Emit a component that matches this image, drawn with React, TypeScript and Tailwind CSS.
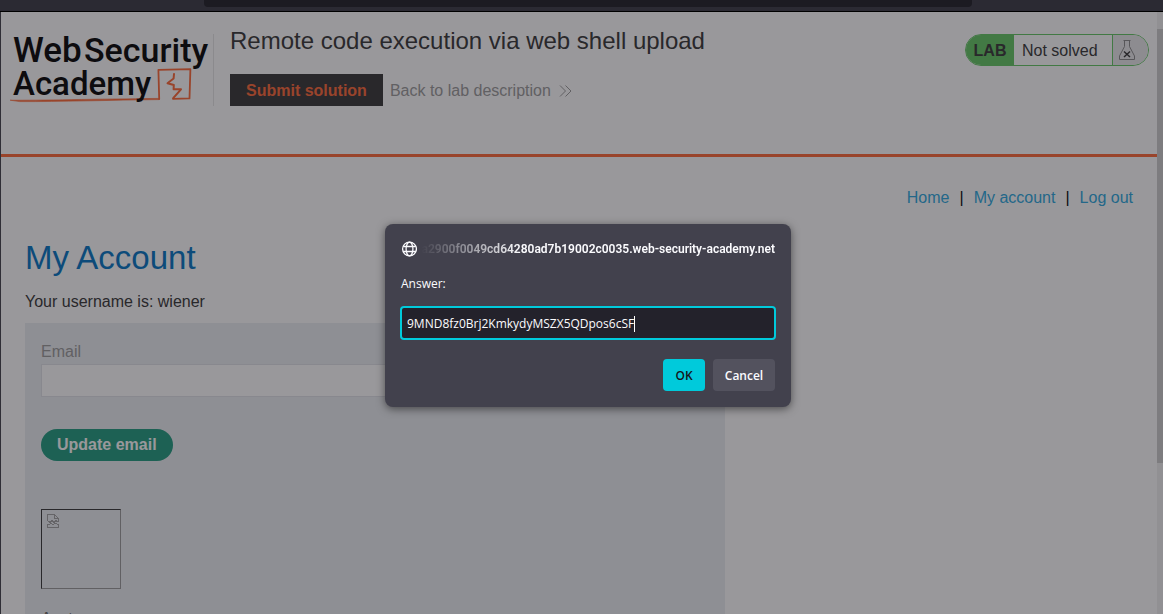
import React from "react";

function Logo() {
  return (
    <svg width="200" height="72" viewBox="10 34 200 72" role="img" aria-label="Web Security Academy" className="block shrink-0 overflow-visible">
      <g fill="#ff6633" stroke="#ff6633" strokeLinecap="round" strokeLinejoin="round">
        <path d="M10.5 100.2C40 100.4 95 99 159 98.4V99.6C110 100.2 60 101.8 20 101.6Z" strokeWidth="0.6" />
        <path d="M159.2 99L158.4 69.8L190.4 69.2L189.5 98.4L173 98.8" fill="none" strokeWidth="1.8" />
        <path d="M174 74L173.6 78.5L167.5 83.2L173.8 85L173.6 89.2L181 89.3L173.2 98.2" fill="none" strokeWidth="2" />
      </g>
      <g fill="#000" style={{ fontFamily: "Roboto, sans-serif" }} fontWeight="500">
        <text x="13" y="62" fontSize="35">Web</text>
        <text x="84" y="62" fontSize="34">Security</text>
        <text x="13" y="95" fontSize="33">Academy</text>
      </g>
    </svg>
  );
}

function Flask() {
  return (
    <svg width="16" height="20" viewBox="0 0 16 20" fill="none" stroke="#888" strokeWidth="1" aria-hidden="true">
      <path d="M4.5 0.5H11.5M5.5 1V6.5L0.5 16V19.5H15.5V16L10.5 6.5V1" />
      <path d="M5 11.5L11 17M11 11.5L5 17" stroke="#333" strokeWidth="1.5" />
    </svg>
  );
}

function BrokenImage() {
  return (
    <svg width="12" height="14" viewBox="0 0 12 14" fill="none" stroke="#a0a0a0" strokeWidth="1" shapeRendering="crispEdges" aria-hidden="true">
      <path d="M0.5 7V0.5H7.5L11.5 4.5V8M7.5 0.5V4.5H11.5" />
      <path d="M0.5 6.5L3 8.5L5 6.5L7 8.5L9 6.5L11.5 8.5M0.5 10L2 11L4 9L6 11L8 9L11.5 11V13.5H0.5V10" />
    </svg>
  );
}

function Globe() {
  return (
    <svg width="16" height="16" viewBox="0 0 16 16" fill="none" stroke="#fbfbfe" strokeWidth="1.3" className="shrink-0" aria-hidden="true">
      <circle cx="8.5" cy="8" r="6.9" />
      <ellipse cx="8.5" cy="8" rx="3.4" ry="6.9" />
      <path d="M2.2 5.5H14.8M2.2 10.5H14.8" />
    </svg>
  );
}

function Header() {
  return (
    <header className="flex h-[145px] items-start border-b-3 border-[#ff6633] pt-[22px] pr-2 pl-[9px]">
      <Logo />
      <div className="ml-[3px] h-[72px] w-px shrink-0 bg-[#e5e5e5]" />
      <div className="ml-4 flex grow flex-col">
        <h2 className="-mt-[9px] text-[24px] leading-8 text-[#333]">Remote code execution via web shell upload</h2>
        <div className="mt-[17px] flex items-center gap-[7px]">
          <button type="button" className="h-8 bg-[#333] px-4 pt-0.5 text-base font-bold text-[#ff6633]">Submit solution</button>
          <a href="#description" className="flex items-center gap-2 pt-0.5 text-base text-[#999]">
            Back to lab description
            <svg width="14" height="12" viewBox="0 0 14 12" fill="none" stroke="#999" strokeWidth="1" aria-hidden="true">
              <path d="M1 0.5L6.5 6L1 11.5M6.5 0.5L12 6L6.5 11.5" />
            </svg>
          </a>
        </div>
      </div>
      <div className="flex h-8 shrink-0 items-stretch overflow-hidden rounded-full border border-[#62c662] text-base text-[#333]">
        <span className="flex w-12 items-center justify-center bg-[#62c662] pt-0.5 font-bold">LAB</span>
        <span className="flex w-[98px] items-center pt-0.5 pl-2">Not solved</span>
        <span className="flex w-9 items-center border-l border-[#62c662] bg-[#eaeaec] pl-1.5">
          <Flask />
        </span>
      </div>
    </header>
  );
}

function Account() {
  return (
    <main className="px-6 pt-[29px]">
      <nav className="flex justify-end gap-2.5 text-base leading-6 text-black">
        <a href="#home" className="text-[#29a7de]">Home</a>
        <span>|</span>
        <a href="#account" className="text-[#29a7de]">My account</a>
        <span>|</span>
        <a href="#logout" className="text-[#29a7de]">Log out</a>
      </nav>
      <h1 className="mt-7 text-[33px] leading-10 text-[#0074c4]">My Account</h1>
      <p className="mt-3 text-base leading-6 text-[#333]">Your username is: wiener</p>
      <form className="mt-[9px] w-[700px] max-w-full bg-[#ebeef2] px-4 pt-[17px] pb-10">
        <label htmlFor="email" className="block text-base leading-6 text-[#999]">Email</label>
        <input id="email" type="email" className="block h-[33px] w-full border border-[#e0e2e8] bg-white px-2" />
        <button type="button" className="mt-8 h-8 rounded-full bg-[#1e9b7e] px-4 text-base font-bold text-white">Update email</button>
        <div className="mt-12 h-20 w-20 border border-t-[#333] border-r-[#999] border-b-[#999] border-l-[#333] px-[5px] py-1">
          <BrokenImage />
        </div>
        <label htmlFor="avatar" className="mt-[18px] block text-base leading-6 text-[#666]">Avatar:</label>
        <input id="avatar" type="file" className="block" />
      </form>
    </main>
  );
}

function Prompt() {
  return (
    <div role="dialog" aria-label="Answer" className="w-[406px] rounded-lg bg-[#42414d] p-4 font-['Open_Sans',sans-serif] text-xs text-[#fbfbfe] shadow-[0_2px_8px_rgba(0,0,0,0.5)]">
      <div className="flex h-[17px] items-center gap-1">
        <Globe />
        <div className="flex min-w-0 grow justify-end overflow-hidden font-[Roboto,sans-serif] font-semibold whitespace-nowrap [mask-image:linear-gradient(to_right,transparent,black_100px)]">
          0a2900f0049cd64280ad7b19002c0035.web-security-academy.net
        </div>
      </div>
      <label htmlFor="answer" className="mt-[19px] block leading-4">Answer:</label>
      <div className="-mx-px mt-3.5 flex h-[34px] items-center rounded border-2 border-[#00cadb] bg-[#23222b] px-[5px] pt-px">
        <input id="answer" type="text" defaultValue="9MND8fz0Brj2KmkydyMSZX5QDpos6cSF" className="field-sizing-content min-w-0 bg-transparent text-xs outline-none" />
        <span className="h-4 w-px bg-white" />
      </div>
      <div className="mt-[19px] flex justify-end gap-2 font-semibold">
        <button type="button" className="h-8 w-[42px] rounded bg-[#00cadb] pt-0.5 text-[#15141a]">OK</button>
        <button type="button" className="h-8 w-[62px] rounded bg-[#53525e] pt-0.5">Cancel</button>
      </div>
    </div>
  );
}

export default function App() {
  return (
    <div className="relative flex h-screen flex-col overflow-hidden font-['Liberation_Sans',Arial,sans-serif]">
      <div className="h-3 shrink-0 border-b border-black bg-[#2b2a33]">
        <div className="mr-[191px] ml-[204px] h-[7px] rounded-b bg-[#1c1b22]" />
      </div>
      <div className="relative flex min-h-0 grow border-l border-[#2f2e36] bg-white">
        <div className="min-w-0 grow overflow-hidden">
          <Header />
          <Account />
        </div>
        <div className="w-1.5 shrink-0 bg-[#f0f0f0] pt-[17px]">
          <div className="h-[434px] bg-[#cdcdcd]" />
        </div>
        <div className="absolute inset-0 flex items-start justify-center bg-[#1c1b22]/45 pt-[212px] pl-3">
          <Prompt />
        </div>
      </div>
    </div>
  );
}
